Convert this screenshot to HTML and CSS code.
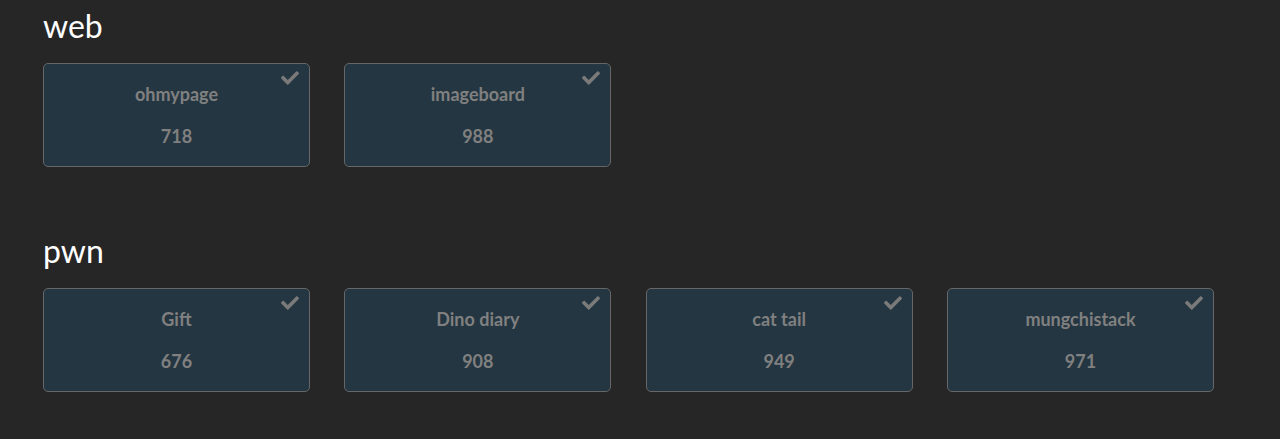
FILE: index.html
```html
<!DOCTYPE html>
<html lang="en">
<head>
<meta charset="utf-8">
<title>Challenges</title>
<link rel="stylesheet" href="styles.css">
</head>
<body>
<main class="page">
  <section class="category">
    <h2 class="category-title">web</h2>
    <div class="grid">
      <div class="card"><svg class="check" viewBox="0 0 512 512"><path d="M173.898 439.404l-166.4-166.4c-9.997-9.997-9.997-26.206 0-36.204l36.203-36.204c9.997-9.998 26.207-9.998 36.204 0L192 312.69 432.095 72.596c9.997-9.997 26.207-9.997 36.204 0l36.203 36.204c9.997 9.997 9.997 26.206 0 36.204l-294.4 294.401c-9.998 9.997-26.207 9.997-36.204-.001z"/></svg><div class="name">ohmypage</div><div class="value">718</div></div>
      <div class="card"><svg class="check" viewBox="0 0 512 512"><path d="M173.898 439.404l-166.4-166.4c-9.997-9.997-9.997-26.206 0-36.204l36.203-36.204c9.997-9.998 26.207-9.998 36.204 0L192 312.69 432.095 72.596c9.997-9.997 26.207-9.997 36.204 0l36.203 36.204c9.997 9.997 9.997 26.206 0 36.204l-294.4 294.401c-9.998 9.997-26.207 9.997-36.204-.001z"/></svg><div class="name">imageboard</div><div class="value">988</div></div>
    </div>
  </section>
  <section class="category">
    <h2 class="category-title">pwn</h2>
    <div class="grid">
      <div class="card"><svg class="check" viewBox="0 0 512 512"><path d="M173.898 439.404l-166.4-166.4c-9.997-9.997-9.997-26.206 0-36.204l36.203-36.204c9.997-9.998 26.207-9.998 36.204 0L192 312.69 432.095 72.596c9.997-9.997 26.207-9.997 36.204 0l36.203 36.204c9.997 9.997 9.997 26.206 0 36.204l-294.4 294.401c-9.998 9.997-26.207 9.997-36.204-.001z"/></svg><div class="name">Gift</div><div class="value">676</div></div>
      <div class="card"><svg class="check" viewBox="0 0 512 512"><path d="M173.898 439.404l-166.4-166.4c-9.997-9.997-9.997-26.206 0-36.204l36.203-36.204c9.997-9.998 26.207-9.998 36.204 0L192 312.69 432.095 72.596c9.997-9.997 26.207-9.997 36.204 0l36.203 36.204c9.997 9.997 9.997 26.206 0 36.204l-294.4 294.401c-9.998 9.997-26.207 9.997-36.204-.001z"/></svg><div class="name">Dino diary</div><div class="value">908</div></div>
      <div class="card"><svg class="check" viewBox="0 0 512 512"><path d="M173.898 439.404l-166.4-166.4c-9.997-9.997-9.997-26.206 0-36.204l36.203-36.204c9.997-9.998 26.207-9.998 36.204 0L192 312.69 432.095 72.596c9.997-9.997 26.207-9.997 36.204 0l36.203 36.204c9.997 9.997 9.997 26.206 0 36.204l-294.4 294.401c-9.998 9.997-26.207 9.997-36.204-.001z"/></svg><div class="name">cat tail</div><div class="value">949</div></div>
      <div class="card"><svg class="check" viewBox="0 0 512 512"><path d="M173.898 439.404l-166.4-166.4c-9.997-9.997-9.997-26.206 0-36.204l36.203-36.204c9.997-9.998 26.207-9.998 36.204 0L192 312.69 432.095 72.596c9.997-9.997 26.207-9.997 36.204 0l36.203 36.204c9.997 9.997 9.997 26.206 0 36.204l-294.4 294.401c-9.998 9.997-26.207 9.997-36.204-.001z"/></svg><div class="name">mungchistack</div><div class="value">971</div></div>
    </div>
  </section>
</main>
</body>
</html>
```
FILE: styles.css
```css
html, body {
  margin: 0;
  padding: 0;
  background: #262626;
}
body {
  font-family: Lato, "Open Sans", sans-serif;
  color: #fff;
}
.page {
  padding: 0 0 0 43px;
}
.category {
  padding-top: 7.4px;
  padding-bottom: 58px;
}
.category-title {
  margin: 0 0 17.2px 0;
  font-size: 32px;
  font-weight: 400;
  line-height: 1.2;
  color: #fff;
}
.grid {
  display: grid;
  grid-template-columns: repeat(4, 267px);
  column-gap: 34.33px;
}
.card {
  position: relative;
  box-sizing: border-box;
  height: 104px;
  background: #243641;
  border: 1px solid #666;
  border-radius: 5px;
  padding: 20.2px 0 0;
  display: flex;
  flex-direction: column;
  align-items: center;
  color: #808080;
  font-weight: 700;
  font-size: 18px;
}
.name, .value {
  line-height: 20px;
}
.name {
  margin-bottom: 21.8px;
}
.check {
  position: absolute;
  top: 5.5px;
  right: 10px;
  width: 18px;
  height: 18px;
  fill: #7a7a7a;
}
```
